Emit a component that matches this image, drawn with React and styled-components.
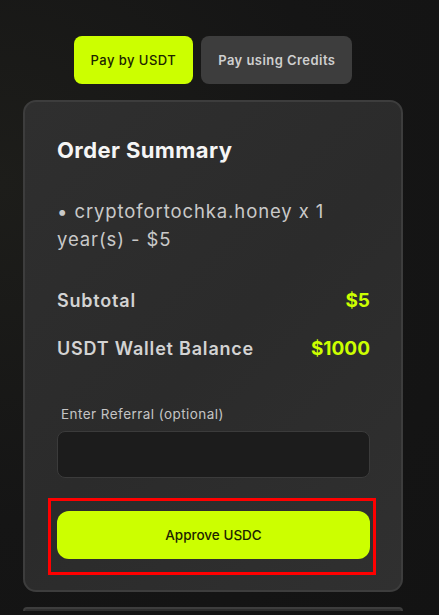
import React from "react";
import styled, { createGlobalStyle } from "styled-components";

const Global = createGlobalStyle`
  html, body { margin: 0; padding: 0; }
  body {
    background: radial-gradient(ellipse at 0% 30%, #1d1d1a 0%, #151515 55%, #131313 100%);
    min-height: 615px;
    font-family: Inter, "Noto Sans", sans-serif;
    overflow: hidden;
  }
`;

const Page = styled.div`
  width: 380px;
  padding: 36px 0 0 23px;
  display: flex;
  flex-direction: column;
  align-items: stretch;
`;

const Tabs = styled.div`
  display: flex;
  justify-content: center;
  gap: 8px;
  margin-left: 0;
`;

const Tab = styled.button`
  height: 48px;
  padding: 0 ${(p) => (p.$active ? "17px" : "17px")};
  border: none;
  border-radius: 8px;
  font-family: Inter, sans-serif;
  font-size: 13px;
  letter-spacing: 0.45px;
  font-weight: ${(p) => (p.$active ? 500 : 600)};
  color: ${(p) => (p.$active ? "#1c2400" : "#cfcfcf")};
  background: ${(p) => (p.$active ? "#ccff00" : "#3d3d3d")};
  cursor: pointer;
`;

const Card = styled.div`
  margin-top: 16px;
  border: 2px solid #3d3d3d;
  border-radius: 13px;
  background: linear-gradient(135deg, #2f2f2f 0%, #2b2b2b 50%, #303030 100%);
  padding: 33px 31px 15px 32px;
  display: flex;
  flex-direction: column;
`;

const NextCard = styled(Card)`
  margin-top: 15px;
  height: 2px;
  padding: 0;
  border-bottom: none;
  border-radius: 13px 13px 0 0;
`;

const Title = styled.h2`
  margin: 0;
  font-size: 22px;
  line-height: 30px;
  font-weight: 700;
  letter-spacing: 0.4px;
  color: #f5f5f5;
`;

const Item = styled.p`
  margin: 32px 0 0;
  font-size: 18.5px;
  line-height: 28px;
  letter-spacing: 0.9px;
  font-weight: 400;
  color: #c9c9c9;
`;

const Row = styled.div`
  display: flex;
  justify-content: space-between;
  align-items: center;
  margin-top: ${(p) => p.$top}px;
  font-size: 18px;
  line-height: 26px;
  font-weight: 600;
  letter-spacing: 0.8px;
`;

const RowLabel = styled.span`
  color: #d3d3d3;
`;

const RowValue = styled.span`
  color: #ccff00;
  font-size: 19px;
  font-weight: 700;
  letter-spacing: 0;
`;

const Label = styled.label`
  margin: 42px 0 0 4px;
  font-size: 13.5px;
  line-height: 20px;
  letter-spacing: 0.45px;
  color: #c4c4c4;
`;

const Input = styled.input`
  margin-top: 7px;
  height: 47px;
  box-sizing: border-box;
  border: 1px solid #3b3b3b;
  border-radius: 8px;
  background: #1c1c1c;
  color: #eee;
  padding: 0 12px;
  outline: none;
`;

const Highlight = styled.div`
  margin: 20px -6px 0 -9px;
  border: 3px solid #ff0000;
  padding: 10px 3px 13px 6px;
`;

const Approve = styled.button`
  width: 100%;
  height: 48px;
  border: none;
  border-radius: 12px;
  background: #ccff00;
  color: #1c2400;
  font-family: Inter, sans-serif;
  font-size: 13.5px;
  font-weight: 500;
  cursor: pointer;
`;

export default function App() {
  return (
    <>
      <Global />
      <Page>
        <Tabs>
          <Tab $active>Pay by USDT</Tab>
          <Tab>Pay using Credits</Tab>
        </Tabs>
        <Card>
          <Title>Order Summary</Title>
          <Item>• cryptofortochka.honey x 1 year(s) - $5</Item>
          <Row $top={35}>
            <RowLabel>Subtotal</RowLabel>
            <RowValue>$5</RowValue>
          </Row>
          <Row $top={22}>
            <RowLabel>USDT Wallet Balance</RowLabel>
            <RowValue>$1000</RowValue>
          </Row>
          <Label>Enter Referral (optional)</Label>
          <Input type="text" />
          <Highlight>
            <Approve>Approve USDC</Approve>
          </Highlight>
        </Card>
        <NextCard />
      </Page>
    </>
  );
}
